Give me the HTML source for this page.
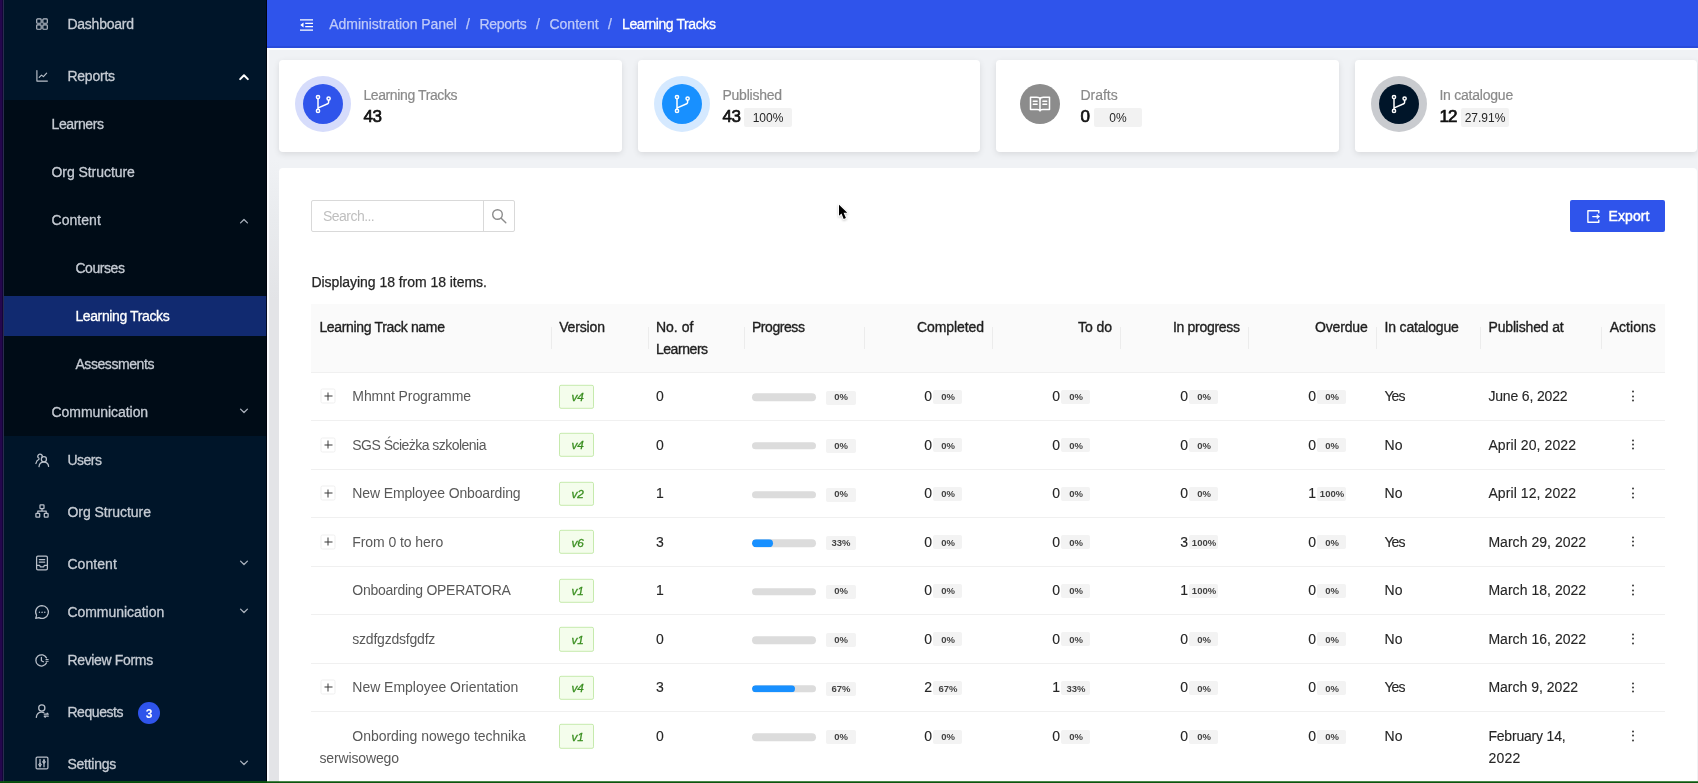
<!DOCTYPE html><html><head><meta charset="utf-8"><title>Learning Tracks</title><style>
*{box-sizing:border-box;margin:0;padding:0}
html,body{width:1698px;height:783px;overflow:hidden}
body{position:relative;background:#f0f2f5;font-family:"Liberation Sans",sans-serif;font-size:14px;color:#262626}
.abs{position:absolute}
#root{position:absolute;left:0;top:0;width:1698px;height:783px;will-change:transform}
#strip-l{left:0;top:0;width:4.200px;height:783px;background:linear-gradient(90deg,#25074d 0,#25074d 2.300px,#14043a 2.500px,#14043a 3.100px,#2a2c4e 3.300px,#2a2c4e 4px,#0c1d38 4.200px)}
#strip-b{left:0;top:780.800px;width:1698px;height:2.200px;background:linear-gradient(180deg,rgba(20,130,20,.55) 0,rgba(8,80,10,.95) 1px,#064a08 2.200px);z-index:50}
#side{left:4px;top:0;width:263px;height:783px;background:#001529}
#sub{left:4px;top:100px;width:263px;height:336px;background:#000c17}
#sel{left:4px;top:296px;width:263px;height:40px;background:#112a70}
.t{position:absolute;white-space:nowrap;line-height:20px;transform:translateY(-50%)}
.t.r{transform:translate(-100%,-50%)}
.mi{color:#c6ccd4;-webkit-text-stroke:.3px #c6ccd4}
.mi.w{color:#fff;-webkit-text-stroke:.3px #fff}
.ic{position:absolute;width:14px;height:14px;transform:translate(-50%,-50%);color:#b9c0ca}
.ic svg{display:block;width:100%;height:100%;overflow:visible}
.chev{position:absolute;width:8.600px;height:5.200px;transform:translate(-50%,-50%)}
.chev svg{display:block;width:100%;height:100%;overflow:visible}
#hdr{left:267px;top:0;width:1431px;height:48px;background:#2f54eb;box-shadow:inset 0 -2px 0 rgba(10,20,120,.14)}
#halo-h{left:267px;top:48px;width:1431px;height:2px;background:#fbfcfe}
#halo-v{left:267px;top:48px;width:2px;height:735px;background:#fafbfe}
#edge-v{left:265.500px;top:0;width:1.500px;height:783px;background:rgba(0,0,8,.75)}
.bc{color:#bfcaf9;-webkit-text-stroke:.25px #bfcaf9}
.bc.w{color:#fff;-webkit-text-stroke:.3px #fff}
.card{position:absolute;top:60px;height:92px;background:#fff;border-radius:4px;box-shadow:0 2px 6px rgba(0,0,0,.10)}
.ring{position:absolute;width:56px;height:56px;border-radius:50%;left:16px;top:16px}
.dot{position:absolute;width:40px;height:40px;border-radius:50%;left:24px;top:24px}
.dot svg{position:absolute;left:50%;top:50%;transform:translate(-50%,-50%)}
.clab{color:#8a8a8a;-webkit-text-stroke:.2px #8a8a8a}
.cval{color:#111;-webkit-text-stroke:.7px #111}
.cbad{position:absolute;height:18.700px;background:#f2f2f2;border-radius:2px}
.cbt{color:#262626}
#gut{left:269px;top:160px;width:10px;height:623px;background:linear-gradient(180deg,#f0f2f5 0,#e9ebee 60px,#e3e4e7 140px,#e3e4e7 100%)}
#panel{left:279px;top:168px;width:1417.500px;height:640px;background:#fff;border-radius:4px}
#search{left:311px;top:200px;width:204px;height:32px;border:1px solid #d9d9d9;border-radius:2px;background:#fff}
#search .sep{position:absolute;left:171px;top:0;width:1px;height:30px;background:#d9d9d9}
#search svg{position:absolute;left:179px;top:7px}
#export{left:1570px;top:200px;width:95px;height:32px;background:#2f54eb;border-radius:2px}
#export svg{position:absolute;left:16.800px;top:10px}
#thead{left:311px;top:304px;width:1354px;height:68px;background:#fafafa}
.th{color:#1f1f1f;-webkit-text-stroke:.35px #1f1f1f}
.vs{position:absolute;top:327px;width:1px;height:22px;background:#ececec}
.rl{position:absolute;left:311px;width:1354px;height:1px;background:#f0f0f0}
.nm{color:#595959}
.dk{color:#262626;-webkit-text-stroke:.12px #262626}
.plus{position:absolute;width:15px;height:15px;border:1px solid #efefef;border-radius:2px;background:#fff;transform:translate(-50%,-50%)}
.plus:before{content:"";position:absolute;left:2.500px;right:2.500px;top:6px;height:1px;background:#3a3a3a}
.plus:after{content:"";position:absolute;top:2.500px;bottom:2.500px;left:6px;width:1px;background:#3a3a3a}
.tag{position:absolute;left:559px;width:35px;height:24.400px;border:1px solid #c6eaad;background:#f4fdec;border-radius:2px;transform:translateY(-50%)}
.tgt{color:#3a8f20;font-style:italic;-webkit-text-stroke:.3px #3a8f20}
.bar{position:absolute;left:752px;width:64px;height:7.600px;border-radius:4px;background:#dcdcdc;transform:translateY(-50%);overflow:hidden}
.bar i{display:block;height:100%;background:#1890ff;border-radius:4px}
.pb{position:absolute;height:14px;background:#f3f3f3;border-radius:2px;transform:translateY(-50%)}
.pbt{font-weight:bold;color:#434343;transform:translate(-50%,-50%)}
.dots{position:absolute;left:1632.500px;width:2px;transform:translate(-50%,-50%)}
.dots i{display:block;width:2px;height:2px;border-radius:50%;background:#3a3a3a;margin:2.300px 0}
#cursor{left:836px;top:202px;width:14px;height:21px}
</style></head><body><div id="root">
<div class="abs" id="side"></div><div class="abs" id="sub"></div><div class="abs" id="sel"></div><div class="abs" id="strip-l"></div>
<div class="ic" style="left:42.200px;top:23.7px;width:13px;height:13px;"><svg viewBox="0 0 14 14" stroke="currentColor" fill="none" stroke-width="1.250" stroke-linecap="round" stroke-linejoin="round"><rect x="1.300" y="1.400" width="4.800" height="4.800" rx=".9"/><rect x="7.900" y="1.400" width="4.800" height="4.800" rx=".9"/><rect x="1.300" y="7.900" width="4.800" height="4.800" rx=".9"/><rect x="7.900" y="7.900" width="4.800" height="4.800" rx=".9"/></svg></div>
<div class="t mi" style="left:67.4px;top:24.1px;font-size:14px;letter-spacing:-0.233px;">Dashboard</div>
<div class="ic" style="left:42.200px;top:75.7px;width:13px;height:13px;"><svg viewBox="0 0 14 14" stroke="currentColor" fill="none" stroke-width="1.250" stroke-linecap="round" stroke-linejoin="round"><path d="M1.500 1.200v11.300h11.300"/><path d="M4 8.500l2.500-2.500 2 1.700L12 4"/></svg></div>
<div class="t mi" style="left:67.4px;top:76.1px;font-size:14px;letter-spacing:-0.219px;">Reports</div>
<div class="chev" style="left:244.3px;top:76.6px;color:#fff;width:9.600px;height:5.800px;"><svg viewBox="0 0 10 6" fill="none" stroke="currentColor" stroke-width="2.1" stroke-linecap="round" stroke-linejoin="round"><path d="M1 5.200L5 1.200l4 4"/></svg></div>
<div class="t mi" style="left:51.5px;top:124.1px;font-size:14px;letter-spacing:-0.396px;">Learners</div>
<div class="t mi" style="left:51.5px;top:172.1px;font-size:14px;letter-spacing:-0.056px;">Org Structure</div>
<div class="t mi" style="left:51.5px;top:220.1px;font-size:14px;letter-spacing:0.050px;">Content</div>
<div class="chev" style="left:244px;top:221px;color:#aab2bd;"><svg viewBox="0 0 10 6" fill="none" stroke="currentColor" stroke-width="1.5" stroke-linecap="round" stroke-linejoin="round"><path d="M1 5.200L5 1.200l4 4"/></svg></div>
<div class="t mi" style="left:75.4px;top:268.1px;font-size:14px;letter-spacing:-0.434px;">Courses</div>
<div class="t mi w" style="left:75.4px;top:316.1px;font-size:14px;letter-spacing:-0.381px;">Learning Tracks</div>
<div class="t mi" style="left:75.4px;top:364.1px;font-size:14px;letter-spacing:-0.423px;">Assessments</div>
<div class="t mi" style="left:51.5px;top:412.1px;font-size:14px;letter-spacing:-0.051px;">Communication</div>
<div class="chev" style="left:244px;top:411px;color:#aab2bd;"><svg viewBox="0 0 10 6" fill="none" stroke="currentColor" stroke-width="1.5" stroke-linecap="round" stroke-linejoin="round"><path d="M1 .8l4 4 4-4"/></svg></div>
<div class="ic" style="left:42.200px;top:459.5px;"><svg viewBox="0 0 14 14" stroke="currentColor" fill="none" stroke-width="1.250" stroke-linecap="round" stroke-linejoin="round"><circle cx="8.900" cy="6.200" r="2.550"/><path d="M4 13.600c.2-2.800 2-4.600 4.800-4.600s4.600 1.800 4.800 4.400"/><path d="M7 4.300A2.200 2.200 0 1 0 4 5.300"/><path d="M.9 10.500C1.300 8.500 2.400 7 4 6.200"/></svg></div>
<div class="t mi" style="left:67.4px;top:460.1px;font-size:14px;letter-spacing:-0.472px;">Users</div>
<div class="ic" style="left:42.200px;top:511.3px;"><svg viewBox="0 0 14 14" stroke="currentColor" fill="none" stroke-width="1.250" stroke-linecap="round" stroke-linejoin="round"><rect x="5" y=".8" width="4" height="3.800" rx=".6"/><rect x=".9" y="9.400" width="3.800" height="3.800" rx=".6"/><rect x="9.300" y="9.400" width="3.800" height="3.800" rx=".6"/><path d="M7 4.600v2.400M2.800 9.400V7h8.400v2.400"/></svg></div>
<div class="t mi" style="left:67.4px;top:512.1px;font-size:14px;letter-spacing:-0.033px;">Org Structure</div>
<div class="ic" style="left:42.200px;top:563.2px;"><svg viewBox="0 0 14 14" stroke="currentColor" fill="none" stroke-width="1.250" stroke-linecap="round" stroke-linejoin="round"><rect x="1.600" y=".2" width="10.800" height="13.600" rx="1.300"/><path d="M4.300 3.600h5.400M4.300 6h5.400M1.600 9.300h3l.7 1.500h3.400l.7-1.500h3"/></svg></div>
<div class="t mi" style="left:67.4px;top:564.1px;font-size:14px;letter-spacing:0.065px;">Content</div>
<div class="chev" style="left:244px;top:563px;color:#aab2bd;"><svg viewBox="0 0 10 6" fill="none" stroke="currentColor" stroke-width="1.5" stroke-linecap="round" stroke-linejoin="round"><path d="M1 .8l4 4 4-4"/></svg></div>
<div class="ic" style="left:42.200px;top:611.6px;"><svg viewBox="0 0 14 14" stroke="currentColor" fill="none" stroke-width="1.250" stroke-linecap="round" stroke-linejoin="round"><path d="M7 .6a6.400 6.400 0 1 1-3.100 12L.7 13.400l.85-3.100A6.400 6.400 0 0 1 7 .6z"/><circle cx="4.300" cy="7.200" r=".25" fill="currentColor" stroke-width=".8"/><circle cx="7" cy="7.200" r=".25" fill="currentColor" stroke-width=".8"/><circle cx="9.700" cy="7.200" r=".25" fill="currentColor" stroke-width=".8"/></svg></div>
<div class="t mi" style="left:67.4px;top:612.1px;font-size:14px;letter-spacing:-0.036px;">Communication</div>
<div class="chev" style="left:244px;top:611px;color:#aab2bd;"><svg viewBox="0 0 10 6" fill="none" stroke="currentColor" stroke-width="1.5" stroke-linecap="round" stroke-linejoin="round"><path d="M1 .8l4 4 4-4"/></svg></div>
<div class="ic" style="left:42.200px;top:659.8px;"><svg viewBox="0 0 14 14" stroke="currentColor" fill="none" stroke-width="1.250" stroke-linecap="round" stroke-linejoin="round"><path d="M11.500 4.900A5.600 5.600 0 1 0 11.500 9.900"/><path d="M6.400 4.400V7.800l2 1"/><path d="M11 6.500h2.200M11 8.300h2.200" stroke-width="1"/></svg></div>
<div class="t mi" style="left:67.4px;top:660.1px;font-size:14px;letter-spacing:-0.331px;">Review Forms</div>
<div class="ic" style="left:42.200px;top:710.8px;"><svg viewBox="0 0 14 14" stroke="currentColor" fill="none" stroke-width="1.250" stroke-linecap="round" stroke-linejoin="round"><circle cx="6.800" cy="4" r="3.100"/><path d="M1.300 13.400c.4-3.300 2.400-5.200 5.400-5.200.8 0 1.500.1 2.100.4"/><path d="M9.300 10.200h3.900M9.300 12.200h3.900M12.200 9.200l1 1M10.300 13.200l-1-1"/></svg></div>
<div class="t mi" style="left:67.4px;top:712.1px;font-size:14px;letter-spacing:-0.432px;">Requests</div>
<div class="ic" style="left:42.200px;top:763.2px;"><svg viewBox="0 0 14 14" stroke="currentColor" fill="none" stroke-width="1.250" stroke-linecap="round" stroke-linejoin="round"><rect x="1.100" y="1.100" width="11.800" height="11.800" rx="1.200"/><path d="M5 3.300v4M5 10v.8M9 3.300v1.200M9 7.500v3.300"/><path d="M5 7.300l1.200 1.400L5 10.100 3.800 8.700zM9 4.500l1.200 1.400L9 7.300 7.800 5.900z"/></svg></div>
<div class="t mi" style="left:67.4px;top:764.1px;font-size:14px;letter-spacing:-0.237px;">Settings</div>
<div class="chev" style="left:244px;top:763px;color:#aab2bd;"><svg viewBox="0 0 10 6" fill="none" stroke="currentColor" stroke-width="1.5" stroke-linecap="round" stroke-linejoin="round"><path d="M1 .8l4 4 4-4"/></svg></div>
<div class="abs" style="left:138px;top:702px;width:22px;height:22px;border-radius:50%;background:#2f54eb"></div>
<div class="t" style="left:149px;top:713.9px;font-size:12px;color:#fff;font-weight:bold;transform:translate(-50%,-50%);">3</div>
<div class="abs" id="hdr"></div><div class="abs" id="halo-h"></div><div class="abs" id="halo-v"></div><div class="abs" id="edge-v"></div>
<div class="abs" style="left:300px;top:18px;width:13px;height:12px"><svg width="13" height="12" viewBox="0 0 13 12" fill="none" stroke="#fff" stroke-width="1.300"><path d="M0 .8h13M5.200 4.300h7.800M5.200 7.700h7.800M0 11.200h13"/><path d="M3.500 3.400L.3 6l3.200 2.600z" fill="#fff" stroke="none"/></svg></div>
<div class="t bc" style="left:329.3px;top:24.1px;font-size:14px;letter-spacing:-0.040px;">Administration Panel</div>
<div class="t bc" style="left:479.5px;top:24.1px;font-size:14px;letter-spacing:-0.276px;">Reports</div>
<div class="t bc" style="left:549.4px;top:24.1px;font-size:14px;letter-spacing:0.036px;">Content</div>
<div class="t bc w" style="left:622px;top:24.1px;font-size:14px;letter-spacing:-0.407px;">Learning Tracks</div>
<div class="t bc" style="left:468px;top:24.1px;font-size:14px;transform:translate(-50%,-50%);">/</div>
<div class="t bc" style="left:538px;top:24.1px;font-size:14px;transform:translate(-50%,-50%);">/</div>
<div class="t bc" style="left:609.9px;top:24.1px;font-size:14px;transform:translate(-50%,-50%);">/</div>
<div class="card" style="left:279px;width:343px">
<div class="ring" style="background:#d6dcfb"></div>
<div class="dot" style="background:#2f54eb"><svg width="20" height="20" viewBox="0 0 20 20" fill="none" stroke="#fff" stroke-width="1.500" stroke-linecap="round"><circle cx="5" cy="3.100" r="1.600"/><circle cx="5" cy="16.900" r="1.600"/><circle cx="15.600" cy="4.600" r="1.600"/><path d="M5 4.800v10.400M5.300 13.900l9.400-4.100c.6-.3.9-.8.9-1.500V6.300"/></svg></div>
</div>
<div class="t clab" style="left:363.4px;top:94.7px;font-size:14px;letter-spacing:-0.387px;">Learning Tracks</div>
<div class="t cval" style="left:363.4px;top:117.0px;font-size:17px;letter-spacing:-0.411px;">43</div>
<div class="card" style="left:638px;width:342px">
<div class="ring" style="background:#d5e9ff"></div>
<div class="dot" style="background:#1890ff"><svg width="20" height="20" viewBox="0 0 20 20" fill="none" stroke="#fff" stroke-width="1.500" stroke-linecap="round"><circle cx="5" cy="3.100" r="1.600"/><circle cx="5" cy="16.900" r="1.600"/><circle cx="15.600" cy="4.600" r="1.600"/><path d="M5 4.800v10.400M5.300 13.900l9.400-4.100c.6-.3.9-.8.9-1.500V6.300"/></svg></div>
</div>
<div class="t clab" style="left:722.4px;top:94.7px;font-size:14px;letter-spacing:-0.222px;">Published</div>
<div class="t cval" style="left:722.4px;top:117.0px;font-size:17px;letter-spacing:-0.411px;">43</div>
<div class="cbad" style="left:744px;top:108.200px;width:48px"></div>
<div class="t cbt" style="left:768px;top:118.0px;font-size:12px;transform:translate(-50%,-50%);">100%</div>
<div class="card" style="left:996px;width:343px">
<div class="dot" style="background:#8c8c8c"><svg width="22" height="18" viewBox="0 0 22 18" fill="none" stroke="#fff" stroke-width="1.500" stroke-linejoin="round" stroke-linecap="round"><path d="M1.500 2.200h6.200c1.700 0 3.300.8 3.300 2.100 0-1.300 1.600-2.100 3.300-2.100h6.200v12.300h-6.600c-1.300 0-2.900.5-2.900 1.300 0-.8-1.600-1.300-2.900-1.300H1.500z"/><path d="M11 4.300v11.500M4.300 6.300h3.800M4.300 9.300h3.800M13.900 6.300h3.800M13.900 9.300h3.800"/></svg></div>
</div>
<div class="t clab" style="left:1080.4px;top:94.7px;font-size:14px;letter-spacing:0.009px;">Drafts</div>
<div class="t cval" style="left:1080.4px;top:117.0px;font-size:17px;letter-spacing:-1.169px;">0</div>
<div class="cbad" style="left:1094px;top:108.200px;width:48px"></div>
<div class="t cbt" style="left:1118px;top:118.0px;font-size:12px;transform:translate(-50%,-50%);">0%</div>
<div class="card" style="left:1355px;width:341.5px">
<div class="ring" style="background:#c9cbcf"></div>
<div class="dot" style="background:#001529"><svg width="20" height="20" viewBox="0 0 20 20" fill="none" stroke="#fff" stroke-width="1.500" stroke-linecap="round"><circle cx="5" cy="3.100" r="1.600"/><circle cx="5" cy="16.900" r="1.600"/><circle cx="15.600" cy="4.600" r="1.600"/><path d="M5 4.800v10.400M5.300 13.900l9.400-4.100c.6-.3.9-.8.9-1.500V6.300"/></svg></div>
</div>
<div class="t clab" style="left:1439.4px;top:94.7px;font-size:14px;letter-spacing:-0.225px;">In catalogue</div>
<div class="t cval" style="left:1439.4px;top:117.0px;font-size:17px;letter-spacing:-0.861px;">12</div>
<div class="cbad" style="left:1461px;top:108.200px;width:48px"></div>
<div class="t cbt" style="left:1485px;top:118.0px;font-size:12px;transform:translate(-50%,-50%);">27.91%</div>
<div class="abs" id="gut"></div><div class="abs" id="panel"></div>
<div class="abs" id="search"><div class="sep"></div><svg width="16" height="16" viewBox="0 0 16 16" fill="none" stroke="#8c8c8c" stroke-width="1.400" stroke-linecap="round"><circle cx="6.500" cy="6.500" r="4.800"/><path d="M10.200 10.200l4.600 4.600"/></svg></div>
<div class="t" style="left:323px;top:216.1px;font-size:14px;letter-spacing:-0.537px;color:#bfbfbf;">Search...</div>
<div class="abs" id="export"><svg width="13" height="13" viewBox="0 0 13 13" fill="none" stroke="#fff" stroke-width="1.400" stroke-linecap="round" stroke-linejoin="round"><path d="M11.800 2.800V.8H.9v11.500h10.900v-2"/><path d="M5.800 6.600h6"/><path d="M10.300 4.700l2.200 1.900-2.200 1.900z" fill="#fff" stroke-width=".6"/></svg></div>
<div class="t" style="left:1608.6px;top:216.3px;font-size:14px;letter-spacing:0.072px;color:#fff;-webkit-text-stroke:.45px #fff;">Export</div>
<div class="t dk" style="left:311.4px;top:282.1px;font-size:14px;letter-spacing:-0.041px;-webkit-text-stroke:.25px #262626;">Displaying 18 from 18 items.</div>
<div class="abs" id="thead"></div>
<div class="t th" style="left:319.4px;top:327.1px;font-size:14px;letter-spacing:-0.333px;">Learning Track name</div>
<div class="t th" style="left:559.2px;top:327.1px;font-size:14px;letter-spacing:-0.158px;">Version</div>
<div class="t th" style="left:655.9px;top:327.1px;font-size:14px;letter-spacing:0.040px;">No. of</div>
<div class="t th" style="left:655.9px;top:349.1px;font-size:14px;letter-spacing:-0.433px;">Learners</div>
<div class="t th" style="left:751.9px;top:327.1px;font-size:14px;letter-spacing:-0.429px;">Progress</div>
<div class="t th" style="left:1384.6px;top:327.1px;font-size:14px;letter-spacing:-0.191px;">In catalogue</div>
<div class="t th" style="left:1488.5px;top:327.1px;font-size:14px;letter-spacing:-0.172px;">Published at</div>
<div class="t th" style="left:1609.7px;top:327.1px;font-size:14px;letter-spacing:0.025px;">Actions</div>
<div class="t r th" style="left:984px;top:327.1px;font-size:14px;letter-spacing:-0.078px;">Completed</div>
<div class="t r th" style="left:1112px;top:327.1px;font-size:14px;letter-spacing:-0.050px;">To do</div>
<div class="t r th" style="left:1239.8px;top:327.1px;font-size:14px;letter-spacing:-0.286px;">In progress</div>
<div class="t r th" style="left:1367.7px;top:327.1px;font-size:14px;letter-spacing:-0.129px;">Overdue</div>
<div class="vs" style="left:551px"></div>
<div class="vs" style="left:648px"></div>
<div class="vs" style="left:744px"></div>
<div class="vs" style="left:864px"></div>
<div class="vs" style="left:992px"></div>
<div class="vs" style="left:1120px"></div>
<div class="vs" style="left:1248px"></div>
<div class="vs" style="left:1376px"></div>
<div class="vs" style="left:1480px"></div>
<div class="vs" style="left:1601px"></div>
<div class="rl" style="top:371.60px"></div>
<div class="plus" style="left:328px;top:396.0px"></div>
<div class="t nm" style="left:352.3px;top:396.1px;font-size:14px;letter-spacing:-0.074px;">Mhmnt Programme</div>
<div class="tag" style="top:396.5px"></div>
<div class="t tgt" style="left:577.7px;top:396.8px;font-size:11.8px;transform:translate(-50%,-50%);">v4</div>
<div class="t dk" style="left:656px;top:396.1px;font-size:14px;">0</div>
<div class="bar" style="top:397.4px"><i style="width:0%"></i></div>
<div class="pb" style="left:826.300px;width:29.600px;top:397.5px"></div>
<div class="t pbt" style="left:841px;top:397.2px;font-size:9.5px;">0%</div>
<div class="t r dk" style="left:932px;top:396.1px;font-size:14px;">0</div>
<div class="pb" style="left:933px;width:29px;top:396.6px"></div>
<div class="t pbt" style="left:948px;top:397.2px;font-size:9.5px;">0%</div>
<div class="t r dk" style="left:1060px;top:396.1px;font-size:14px;">0</div>
<div class="pb" style="left:1061px;width:29px;top:396.6px"></div>
<div class="t pbt" style="left:1076px;top:397.2px;font-size:9.5px;">0%</div>
<div class="t r dk" style="left:1188px;top:396.1px;font-size:14px;">0</div>
<div class="pb" style="left:1189px;width:29px;top:396.6px"></div>
<div class="t pbt" style="left:1204px;top:397.2px;font-size:9.5px;">0%</div>
<div class="t r dk" style="left:1316px;top:396.1px;font-size:14px;">0</div>
<div class="pb" style="left:1317px;width:29px;top:396.6px"></div>
<div class="t pbt" style="left:1332px;top:397.2px;font-size:9.5px;">0%</div>
<div class="t dk" style="left:1384.4px;top:396.1px;font-size:14px;letter-spacing:-0.881px;">Yes</div>
<div class="t dk" style="left:1488.4px;top:396.1px;font-size:14px;letter-spacing:-0.164px;">June 6, 2022</div>
<div class="dots" style="top:396.0px"><i></i><i></i><i></i></div>
<div class="rl" style="top:420.15px"></div>
<div class="plus" style="left:328px;top:444.6px"></div>
<div class="t nm" style="left:352.3px;top:444.7px;font-size:14px;letter-spacing:-0.530px;">SGS Ścieżka szkolenia</div>
<div class="tag" style="top:445.1px"></div>
<div class="t tgt" style="left:577.7px;top:445.4px;font-size:11.8px;transform:translate(-50%,-50%);">v4</div>
<div class="t dk" style="left:656px;top:444.7px;font-size:14px;">0</div>
<div class="bar" style="top:445.9px"><i style="width:0%"></i></div>
<div class="pb" style="left:826.300px;width:29.600px;top:446.1px"></div>
<div class="t pbt" style="left:841px;top:445.8px;font-size:9.5px;">0%</div>
<div class="t r dk" style="left:932px;top:444.7px;font-size:14px;">0</div>
<div class="pb" style="left:933px;width:29px;top:445.2px"></div>
<div class="t pbt" style="left:948px;top:445.8px;font-size:9.5px;">0%</div>
<div class="t r dk" style="left:1060px;top:444.7px;font-size:14px;">0</div>
<div class="pb" style="left:1061px;width:29px;top:445.2px"></div>
<div class="t pbt" style="left:1076px;top:445.8px;font-size:9.5px;">0%</div>
<div class="t r dk" style="left:1188px;top:444.7px;font-size:14px;">0</div>
<div class="pb" style="left:1189px;width:29px;top:445.2px"></div>
<div class="t pbt" style="left:1204px;top:445.8px;font-size:9.5px;">0%</div>
<div class="t r dk" style="left:1316px;top:444.7px;font-size:14px;">0</div>
<div class="pb" style="left:1317px;width:29px;top:445.2px"></div>
<div class="t pbt" style="left:1332px;top:445.8px;font-size:9.5px;">0%</div>
<div class="t dk" style="left:1384.4px;top:444.7px;font-size:14px;letter-spacing:0.197px;">No</div>
<div class="t dk" style="left:1488.4px;top:444.7px;font-size:14px;letter-spacing:0.092px;">April 20, 2022</div>
<div class="dots" style="top:444.6px"><i></i><i></i><i></i></div>
<div class="rl" style="top:468.70px"></div>
<div class="plus" style="left:328px;top:493.1px"></div>
<div class="t nm" style="left:352.3px;top:493.2px;font-size:14px;letter-spacing:-0.131px;">New Employee Onboarding</div>
<div class="tag" style="top:493.6px"></div>
<div class="t tgt" style="left:577.7px;top:493.9px;font-size:11.8px;transform:translate(-50%,-50%);">v2</div>
<div class="t dk" style="left:656px;top:493.2px;font-size:14px;">1</div>
<div class="bar" style="top:494.5px"><i style="width:0%"></i></div>
<div class="pb" style="left:826.300px;width:29.600px;top:494.6px"></div>
<div class="t pbt" style="left:841px;top:494.3px;font-size:9.5px;">0%</div>
<div class="t r dk" style="left:932px;top:493.2px;font-size:14px;">0</div>
<div class="pb" style="left:933px;width:29px;top:493.7px"></div>
<div class="t pbt" style="left:948px;top:494.3px;font-size:9.5px;">0%</div>
<div class="t r dk" style="left:1060px;top:493.2px;font-size:14px;">0</div>
<div class="pb" style="left:1061px;width:29px;top:493.7px"></div>
<div class="t pbt" style="left:1076px;top:494.3px;font-size:9.5px;">0%</div>
<div class="t r dk" style="left:1188px;top:493.2px;font-size:14px;">0</div>
<div class="pb" style="left:1189px;width:29px;top:493.7px"></div>
<div class="t pbt" style="left:1204px;top:494.3px;font-size:9.5px;">0%</div>
<div class="t r dk" style="left:1316px;top:493.2px;font-size:14px;">1</div>
<div class="pb" style="left:1317px;width:29px;top:493.7px"></div>
<div class="t pbt" style="left:1332px;top:494.3px;font-size:9.5px;">100%</div>
<div class="t dk" style="left:1384.4px;top:493.2px;font-size:14px;letter-spacing:0.197px;">No</div>
<div class="t dk" style="left:1488.4px;top:493.2px;font-size:14px;letter-spacing:0.092px;">April 12, 2022</div>
<div class="dots" style="top:493.1px"><i></i><i></i><i></i></div>
<div class="rl" style="top:517.25px"></div>
<div class="plus" style="left:328px;top:541.6px"></div>
<div class="t nm" style="left:352.3px;top:541.8px;font-size:14px;letter-spacing:-0.073px;">From 0 to hero</div>
<div class="tag" style="top:542.1px"></div>
<div class="t tgt" style="left:577.7px;top:542.5px;font-size:11.8px;transform:translate(-50%,-50%);">v6</div>
<div class="t dk" style="left:656px;top:541.8px;font-size:14px;">3</div>
<div class="bar" style="top:543.0px"><i style="width:33%"></i></div>
<div class="pb" style="left:826.300px;width:29.600px;top:543.1px"></div>
<div class="t pbt" style="left:841px;top:542.9px;font-size:9.5px;">33%</div>
<div class="t r dk" style="left:932px;top:541.8px;font-size:14px;">0</div>
<div class="pb" style="left:933px;width:29px;top:542.2px"></div>
<div class="t pbt" style="left:948px;top:542.9px;font-size:9.5px;">0%</div>
<div class="t r dk" style="left:1060px;top:541.8px;font-size:14px;">0</div>
<div class="pb" style="left:1061px;width:29px;top:542.2px"></div>
<div class="t pbt" style="left:1076px;top:542.9px;font-size:9.5px;">0%</div>
<div class="t r dk" style="left:1188px;top:541.8px;font-size:14px;">3</div>
<div class="pb" style="left:1189px;width:29px;top:542.2px"></div>
<div class="t pbt" style="left:1204px;top:542.9px;font-size:9.5px;">100%</div>
<div class="t r dk" style="left:1316px;top:541.8px;font-size:14px;">0</div>
<div class="pb" style="left:1317px;width:29px;top:542.2px"></div>
<div class="t pbt" style="left:1332px;top:542.9px;font-size:9.5px;">0%</div>
<div class="t dk" style="left:1384.4px;top:541.8px;font-size:14px;letter-spacing:-0.881px;">Yes</div>
<div class="t dk" style="left:1488.4px;top:541.8px;font-size:14px;letter-spacing:0.036px;">March 29, 2022</div>
<div class="dots" style="top:541.6px"><i></i><i></i><i></i></div>
<div class="rl" style="top:565.80px"></div>
<div class="t nm" style="left:352.3px;top:590.3px;font-size:14px;letter-spacing:-0.269px;">Onboarding OPERATORA</div>
<div class="tag" style="top:590.7px"></div>
<div class="t tgt" style="left:577.7px;top:591.0px;font-size:11.8px;transform:translate(-50%,-50%);">v1</div>
<div class="t dk" style="left:656px;top:590.3px;font-size:14px;">1</div>
<div class="bar" style="top:591.6px"><i style="width:0%"></i></div>
<div class="pb" style="left:826.300px;width:29.600px;top:591.7px"></div>
<div class="t pbt" style="left:841px;top:591.4px;font-size:9.5px;">0%</div>
<div class="t r dk" style="left:932px;top:590.3px;font-size:14px;">0</div>
<div class="pb" style="left:933px;width:29px;top:590.8px"></div>
<div class="t pbt" style="left:948px;top:591.4px;font-size:9.5px;">0%</div>
<div class="t r dk" style="left:1060px;top:590.3px;font-size:14px;">0</div>
<div class="pb" style="left:1061px;width:29px;top:590.8px"></div>
<div class="t pbt" style="left:1076px;top:591.4px;font-size:9.5px;">0%</div>
<div class="t r dk" style="left:1188px;top:590.3px;font-size:14px;">1</div>
<div class="pb" style="left:1189px;width:29px;top:590.8px"></div>
<div class="t pbt" style="left:1204px;top:591.4px;font-size:9.5px;">100%</div>
<div class="t r dk" style="left:1316px;top:590.3px;font-size:14px;">0</div>
<div class="pb" style="left:1317px;width:29px;top:590.8px"></div>
<div class="t pbt" style="left:1332px;top:591.4px;font-size:9.5px;">0%</div>
<div class="t dk" style="left:1384.4px;top:590.3px;font-size:14px;letter-spacing:0.197px;">No</div>
<div class="t dk" style="left:1488.4px;top:590.3px;font-size:14px;letter-spacing:0.036px;">March 18, 2022</div>
<div class="dots" style="top:590.2px"><i></i><i></i><i></i></div>
<div class="rl" style="top:614.35px"></div>
<div class="t nm" style="left:352.3px;top:638.9px;font-size:14px;letter-spacing:-0.216px;">szdfgzdsfgdfz</div>
<div class="tag" style="top:639.2px"></div>
<div class="t tgt" style="left:577.7px;top:639.6px;font-size:11.8px;transform:translate(-50%,-50%);">v1</div>
<div class="t dk" style="left:656px;top:638.9px;font-size:14px;">0</div>
<div class="bar" style="top:640.1px"><i style="width:0%"></i></div>
<div class="pb" style="left:826.300px;width:29.600px;top:640.2px"></div>
<div class="t pbt" style="left:841px;top:640.0px;font-size:9.5px;">0%</div>
<div class="t r dk" style="left:932px;top:638.9px;font-size:14px;">0</div>
<div class="pb" style="left:933px;width:29px;top:639.4px"></div>
<div class="t pbt" style="left:948px;top:640.0px;font-size:9.5px;">0%</div>
<div class="t r dk" style="left:1060px;top:638.9px;font-size:14px;">0</div>
<div class="pb" style="left:1061px;width:29px;top:639.4px"></div>
<div class="t pbt" style="left:1076px;top:640.0px;font-size:9.5px;">0%</div>
<div class="t r dk" style="left:1188px;top:638.9px;font-size:14px;">0</div>
<div class="pb" style="left:1189px;width:29px;top:639.4px"></div>
<div class="t pbt" style="left:1204px;top:640.0px;font-size:9.5px;">0%</div>
<div class="t r dk" style="left:1316px;top:638.9px;font-size:14px;">0</div>
<div class="pb" style="left:1317px;width:29px;top:639.4px"></div>
<div class="t pbt" style="left:1332px;top:640.0px;font-size:9.5px;">0%</div>
<div class="t dk" style="left:1384.4px;top:638.9px;font-size:14px;letter-spacing:0.197px;">No</div>
<div class="t dk" style="left:1488.4px;top:638.9px;font-size:14px;letter-spacing:0.036px;">March 16, 2022</div>
<div class="dots" style="top:638.8px"><i></i><i></i><i></i></div>
<div class="rl" style="top:662.90px"></div>
<div class="plus" style="left:328px;top:687.3px"></div>
<div class="t nm" style="left:352.3px;top:687.4px;font-size:14px;letter-spacing:-0.018px;">New Employee Orientation</div>
<div class="tag" style="top:687.8px"></div>
<div class="t tgt" style="left:577.7px;top:688.1px;font-size:11.8px;transform:translate(-50%,-50%);">v4</div>
<div class="t dk" style="left:656px;top:687.4px;font-size:14px;">3</div>
<div class="bar" style="top:688.7px"><i style="width:67%"></i></div>
<div class="pb" style="left:826.300px;width:29.600px;top:688.8px"></div>
<div class="t pbt" style="left:841px;top:688.5px;font-size:9.5px;">67%</div>
<div class="t r dk" style="left:932px;top:687.4px;font-size:14px;">2</div>
<div class="pb" style="left:933px;width:29px;top:687.9px"></div>
<div class="t pbt" style="left:948px;top:688.5px;font-size:9.5px;">67%</div>
<div class="t r dk" style="left:1060px;top:687.4px;font-size:14px;">1</div>
<div class="pb" style="left:1061px;width:29px;top:687.9px"></div>
<div class="t pbt" style="left:1076px;top:688.5px;font-size:9.5px;">33%</div>
<div class="t r dk" style="left:1188px;top:687.4px;font-size:14px;">0</div>
<div class="pb" style="left:1189px;width:29px;top:687.9px"></div>
<div class="t pbt" style="left:1204px;top:688.5px;font-size:9.5px;">0%</div>
<div class="t r dk" style="left:1316px;top:687.4px;font-size:14px;">0</div>
<div class="pb" style="left:1317px;width:29px;top:687.9px"></div>
<div class="t pbt" style="left:1332px;top:688.5px;font-size:9.5px;">0%</div>
<div class="t dk" style="left:1384.4px;top:687.4px;font-size:14px;letter-spacing:-0.881px;">Yes</div>
<div class="t dk" style="left:1488.4px;top:687.4px;font-size:14px;letter-spacing:0.008px;">March 9, 2022</div>
<div class="dots" style="top:687.3px"><i></i><i></i><i></i></div>
<div class="rl" style="top:711.45px"></div>
<div class="t nm" style="left:352.3px;top:736.0px;font-size:14px;letter-spacing:-0.034px;">Onbording nowego technika</div>
<div class="t nm" style="left:319.4px;top:758.2px;font-size:14px;letter-spacing:-0.131px;">serwisowego</div>
<div class="tag" style="top:736.4px"></div>
<div class="t tgt" style="left:577.7px;top:736.7px;font-size:11.8px;transform:translate(-50%,-50%);">v1</div>
<div class="t dk" style="left:656px;top:736.0px;font-size:14px;">0</div>
<div class="bar" style="top:737.2px"><i style="width:0%"></i></div>
<div class="pb" style="left:826.300px;width:29.600px;top:737.4px"></div>
<div class="t pbt" style="left:841px;top:737.1px;font-size:9.5px;">0%</div>
<div class="t r dk" style="left:932px;top:736.0px;font-size:14px;">0</div>
<div class="pb" style="left:933px;width:29px;top:736.5px"></div>
<div class="t pbt" style="left:948px;top:737.1px;font-size:9.5px;">0%</div>
<div class="t r dk" style="left:1060px;top:736.0px;font-size:14px;">0</div>
<div class="pb" style="left:1061px;width:29px;top:736.5px"></div>
<div class="t pbt" style="left:1076px;top:737.1px;font-size:9.5px;">0%</div>
<div class="t r dk" style="left:1188px;top:736.0px;font-size:14px;">0</div>
<div class="pb" style="left:1189px;width:29px;top:736.5px"></div>
<div class="t pbt" style="left:1204px;top:737.1px;font-size:9.5px;">0%</div>
<div class="t r dk" style="left:1316px;top:736.0px;font-size:14px;">0</div>
<div class="pb" style="left:1317px;width:29px;top:736.5px"></div>
<div class="t pbt" style="left:1332px;top:737.1px;font-size:9.5px;">0%</div>
<div class="t dk" style="left:1384.4px;top:736.0px;font-size:14px;letter-spacing:0.197px;">No</div>
<div class="t dk" style="left:1488.4px;top:736.0px;font-size:14px;letter-spacing:-0.190px;">February 14,</div>
<div class="t dk" style="left:1488.4px;top:758.2px;font-size:14px;letter-spacing:0.211px;">2022</div>
<div class="dots" style="top:735.9px"><i></i><i></i><i></i></div>
<div class="abs" id="cursor"><svg width="14" height="21" viewBox="0 0 14 21" style="filter:drop-shadow(.6px 1px .8px rgba(0,0,0,.22))"><path d="M3 2.800v11l2.500-2.300 2.200 5.500 2.200-.9-2.300-5.400h3.700z" fill="#000" stroke="#fff" stroke-width="1.800" stroke-linejoin="round" paint-order="stroke"/></svg></div>
<div class="abs" id="strip-b"></div>
</div></body></html>
